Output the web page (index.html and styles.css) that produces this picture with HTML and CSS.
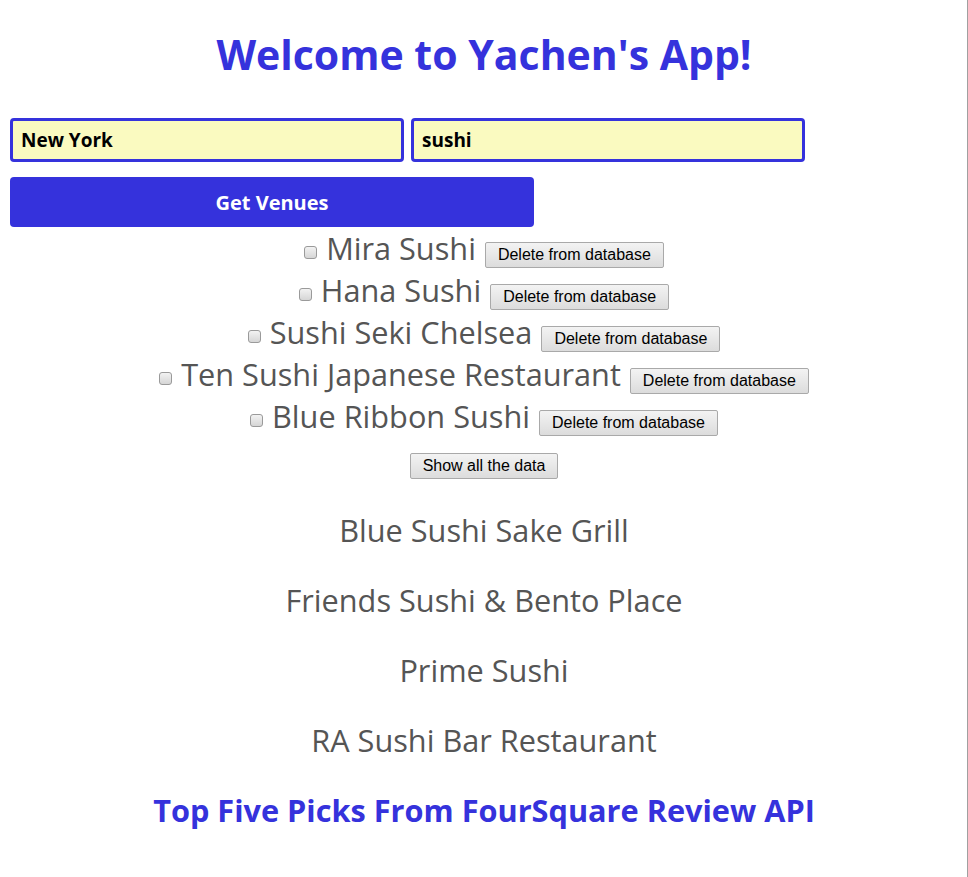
FILE: index.html
```html
<!DOCTYPE html>
<html>
<head>
<meta charset="utf-8">
<link rel="stylesheet" href="styles.css">
</head>
<body>
<div class="app">
  <h1 class="title">Welcome to Yachen's App!</h1>
  <form class="search">
    <div class="fields">
      <input class="field" type="text" value="New York">
      <input class="field" type="text" value="sushi">
    </div>
    <button class="go" type="button">Get Venues</button>
  </form>
  <ul class="saved">
    <li class="saved-row"><input class="check" type="checkbox"><span class="name">Mira Sushi</span><button class="btn" type="button">Delete from database</button></li>
    <li class="saved-row"><input class="check" type="checkbox"><span class="name">Hana Sushi</span><button class="btn" type="button">Delete from database</button></li>
    <li class="saved-row"><input class="check" type="checkbox"><span class="name">Sushi Seki Chelsea</span><button class="btn" type="button">Delete from database</button></li>
    <li class="saved-row"><input class="check" type="checkbox"><span class="name">Ten Sushi Japanese Restaurant</span><button class="btn" type="button">Delete from database</button></li>
    <li class="saved-row"><input class="check" type="checkbox"><span class="name">Blue Ribbon Sushi</span><button class="btn" type="button">Delete from database</button></li>
  </ul>
  <div class="show-row"><button class="btn" type="button">Show all the data</button></div>
  <ul class="picks">
    <li class="pick">Blue Sushi Sake Grill</li>
    <li class="pick">Friends Sushi &amp; Bento Place</li>
    <li class="pick">Prime Sushi</li>
    <li class="pick">RA Sushi Bar Restaurant</li>
  </ul>
  <h2 class="subtitle">Top Five Picks From FourSquare Review API</h2>
</div>
</body>
</html>
```
FILE: styles.css
```css
html {
  min-height: 100%;
  box-shadow: inset -1px 0 0 #a0a0a0;
  background: #fff;
}
body {
  margin: 8px;
  font-family: "Open Sans", "Noto Sans", sans-serif;
  color: #555;
}
.app {
  display: flex;
  flex-direction: column;
}
.title {
  margin: 18px 0 0;
  text-align: center;
  font-size: 41px;
  line-height: 56px;
  font-weight: 700;
  color: #3532dc;
}
.search {
  margin-top: 36px;
  padding-left: 2px;
}
.fields {
  display: flex;
  gap: 7px;
}
.field {
  box-sizing: border-box;
  width: 394px;
  height: 44px;
  border: 3px solid #3532dc;
  border-radius: 4px;
  background: #fafac0;
  padding: 0 8px;
  font-family: "Open Sans", sans-serif;
  font-weight: 700;
  font-size: 19px;
  color: #000;
  outline: none;
}
.go {
  display: block;
  margin-top: 15px;
  width: 524px;
  height: 50px;
  border: none;
  border-radius: 4px;
  background: #3532dc;
  color: #fff;
  font-family: "Open Sans", sans-serif;
  font-weight: 700;
  font-size: 20px;
}
.saved {
  list-style: none;
  margin: 0;
  padding: 0;
}
.saved-row {
  display: flex;
  justify-content: center;
  align-items: center;
  height: 42px;
}
.check {
  appearance: none;
  -webkit-appearance: none;
  box-sizing: border-box;
  width: 13px;
  height: 13px;
  margin: 8px 9px 0 0;
  border: 1px solid #9a9a9a;
  border-radius: 3px;
  background: linear-gradient(#f2f2f2, #d6d6d6);
}
.name {
  font-size: 30.7px;
  color: #555;
  margin-right: 9px;
}
.btn {
  box-sizing: border-box;
  height: 26px;
  padding: 0 12px;
  border: 1px solid #a9a9a9;
  border-radius: 2px;
  background: linear-gradient(#f3f3f3, #dcdcdc);
  font-family: "Liberation Sans", Arial, sans-serif;
  font-size: 16px;
  color: #000;
  margin-top: 14px;
}
.show-row {
  display: flex;
  justify-content: center;
  margin-top: 16px;
}
.show-row .btn {
  margin-top: 0;
}
.picks {
  list-style: none;
  margin: 31px 0 0;
  padding: 0;
}
.pick {
  text-align: center;
  font-size: 30.7px;
  line-height: 40px;
  margin-bottom: 30px;
}
.subtitle {
  margin: 0;
  text-align: center;
  font-size: 30.7px;
  line-height: 40px;
  font-weight: 700;
  color: #3532dc;
}
```
